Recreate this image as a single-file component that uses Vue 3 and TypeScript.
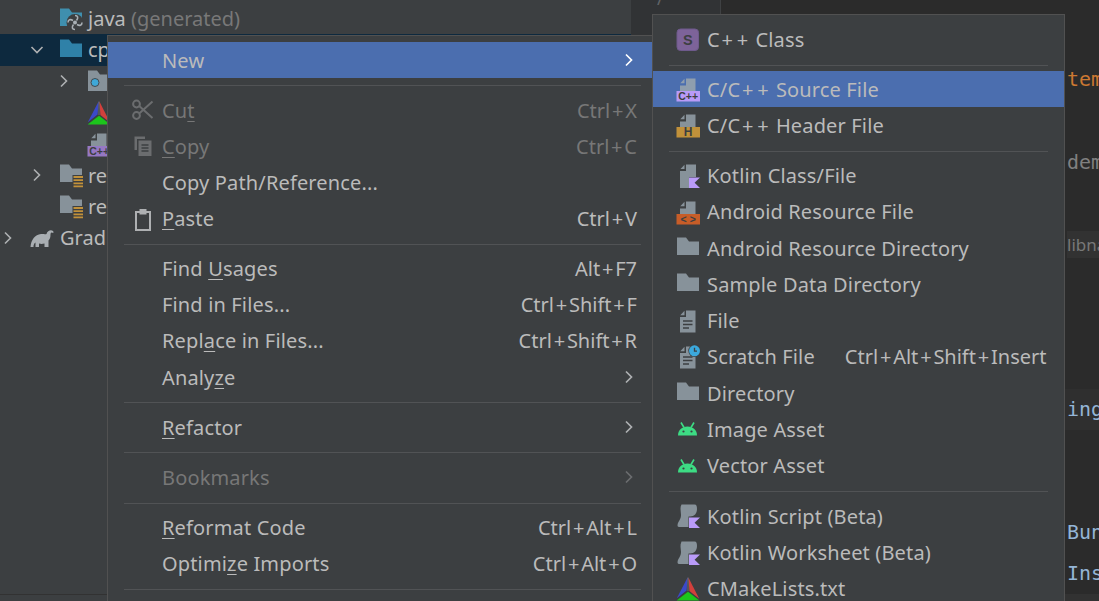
<script setup lang="ts">
import { h } from 'vue'

type Shape = [string, Record<string, string | number>, string?]
const G = '#87929a'
const D = '#3c3f41'
const docBody = 'M10 1.5H19.5V23.5H4V8H10z'
const docFold = 'M8.5 1.8L4.3 6.2H8.5z'
const kTag: Shape = ['path', { d: 'M13 13.5H24L18.6 18.8L24 24H13z', fill: '#b99bf8' }]
const tagDoc = (band: string, label: string, fg: string, size: number, g = '#87929a'): Shape[] => [
  ['path', { d: 'M10 1.5H19.5V14H4V8.4H10z', fill: g }],
  ['path', { d: 'M8.5 1.8L4.3 6.2H8.5z', fill: g }],
  ['rect', { x: 0.5, y: 14, width: 23.5, height: 10.5, fill: band }],
  ['text', { x: 12.2, y: 23, 'text-anchor': 'middle', 'font-size': size, 'font-weight': 700, 'font-family': '"Liberation Sans", sans-serif', fill: fg }, label]
]
const folder = (c: string): Shape[] => [
  ['path', { d: 'M1 1.5H10L13 5.5H23V19H1z', fill: c }]
]
const lines = (c: string): Shape[] => [
  ['path', { d: 'M7 12H16.5M7 15.5H16.5M7 19H13', stroke: c, 'stroke-width': 1.5, fill: 'none' }]
]
const kScript: Shape[] = [
  ['path', { d: 'M5.5 .5H18.5C20.6 .5 21 2.5 21 5C21 9.5 18.5 12.5 14 12.5H12.5V23H3C1.6 23 1.4 22 1.6 20.5C2.2 17 5 15.5 5 11C5 7.5 3.6 4 5.5 .5z', fill: G }],
  kTag
]
const cmake = (w: number): Shape[] => [
  ['path', { d: 'M11.6 0.5L0.8 21.2L10.6 13.6z', fill: '#3b49c9' }],
  ['path', { d: 'M12.4 0.5L23.2 21.8L13.4 14z', fill: '#d2403c' }],
  ['path', { d: 'M0.6 23.5L12 14.8L23.4 23.5z', fill: '#1cc51c' }],
  ['path', { d: 'M12 0.5V14', stroke: '#8d8d9a', 'stroke-width': w, fill: 'none' }]
]
const icons: Record<string, Shape[]> = {
  s: [
    ['rect', { x: 1, y: 1, width: 21.5, height: 21.5, rx: 3.5, fill: '#7d6399', stroke: '#6e5a8c' }],
    ['text', { x: 11.8, y: 17, 'text-anchor': 'middle', 'font-size': 14.5, 'font-weight': 700, 'font-family': '"Liberation Sans", sans-serif', fill: '#3c3f41' }, 'S']
  ],
  cpp: tagDoc('#b99bf8', 'C++', '#3c3f41', 10.5, '#8f9eae'),
  cppTree: tagDoc('#9678c4', 'C++', '#3c3f41', 10.5),
  h: tagDoc('#c1913a', 'H', '#3c3f41', 12),
  res: tagDoc('#c75d28', '< >', '#3c3f41', 10.5),
  kotlin: [
    ['path', { d: 'M10 0.5H20V13H13V24H4V7H10z', fill: G }],
    ['path', { d: 'M8.5 0.8L4.5 5H8.5z', fill: G }],
    kTag
  ],
  folder: folder(G),
  file: [
    ['path', { d: docBody, fill: G }],
    ['path', { d: docFold, fill: G }],
    ...lines(D)
  ],
  scratch: [
    ['path', { d: docBody, fill: G }],
    ['path', { d: docFold, fill: G }],
    ...lines(D),
    ['circle', { cx: 18.5, cy: 5.8, r: 6.2, fill: D }],
    ['circle', { cx: 18.5, cy: 5.8, r: 5.5, fill: '#3ba8dc' }],
    ['path', { d: 'M18.5 2.8V6.2H21', stroke: D, 'stroke-width': 1.3, fill: 'none' }]
  ],
  android: [
    ['path', { d: 'M2 18.5C2 13 6 9.5 11.5 9.5S21 13 21 18.5z', fill: '#3ddc84' }],
    ['path', { d: 'M5 5.5L8 10.5M18 5.5L15 10.5', stroke: '#3ddc84', 'stroke-width': 1.6, fill: 'none' }],
    ['circle', { cx: 7.5, cy: 14.5, r: 1.1, fill: D }],
    ['circle', { cx: 15.5, cy: 14.5, r: 1.1, fill: D }]
  ],
  kscript: kScript,
  cmake: cmake(0.6),
  scissors: [
    ['circle', { cx: 5.5, cy: 6, r: 3.4, fill: 'none', stroke: '#6b6d6f', 'stroke-width': 2 }],
    ['circle', { cx: 5.5, cy: 17.5, r: 3.4, fill: 'none', stroke: '#6b6d6f', 'stroke-width': 2 }],
    ['path', { d: 'M8.2 8L21.5 20M8.2 15.5L21.5 3.5', stroke: '#6b6d6f', 'stroke-width': 2, fill: 'none' }]
  ],
  copy: [
    ['path', { d: 'M3.5 2.5H14V5H6V16H3.5z', fill: '#6b6d6f' }],
    ['path', { d: 'M7.5 6.5H20.5V22H7.5z', fill: '#6b6d6f' }],
    ['path', { d: 'M10.5 11H17.5M10.5 14H17.5M10.5 17H17.5', stroke: D, 'stroke-width': 1.5, fill: 'none' }]
  ],
  paste: [
    ['path', { d: 'M5 5H19V23H5z', fill: 'none', stroke: '#aeb0b2', 'stroke-width': 2 }],
    ['rect', { x: 8.5, y: 2, width: 7, height: 5.5, fill: '#aeb0b2' }]
  ],
  java: [
    ['path', { d: 'M1 1.5H10L13 5.5H23V19H1z', fill: '#3f8fae' }],
    ['circle', { cx: 16, cy: 15.5, r: 8.5, fill: D }],
    ['circle', { cx: 16, cy: 15.5, r: 2, fill: '#a9b0b5' }],
    ['path', { d: 'M16 8.5C19 8.5 19.5 11 17.5 13.5M23 15.5C23 18.5 20.5 19 18 17.5M16 22.5C13 22.5 12.5 20 14.5 17.5M9 15.5C9 12.5 11.5 12 14 13.5', stroke: '#a9b0b5', 'stroke-width': 1.6, fill: 'none' }]
  ],
  blue: folder('#2f81a8'),
  cam: [
    ['path', { d: 'M1 1.5H10L13 5.5H23V22H1z', fill: G }],
    ['circle', { cx: 8, cy: 13.5, r: 4, fill: '#3ea8d8', stroke: '#45494c', 'stroke-width': 1 }]
  ],
  resfolder: [
    ['path', { d: 'M1 1.5H10L13 5.5H23V19H1z', fill: G }],
    ['rect', { x: 13.5, y: 12, width: 11, height: 12.5, fill: D }],
    ['path', { d: 'M14.5 14H24M14.5 17.2H24M14.5 20.4H24M14.5 23.4H24', stroke: '#c1913a', 'stroke-width': 1.8, fill: 'none' }]
  ],
  gradle: [
    ['path', { d: 'M0.5 21C1 14 5 8.5 11 8C14 7.8 15 8.5 16.5 8C17.5 4.5 21 3.5 23 5C24 6 23.5 7.5 22.5 6.8C21.5 6 20.5 6.5 20.5 8.5C20.5 11.5 20 13 18.5 14.5V21H14.5V17.5C12 18.2 10.5 18 9 17.5V21H5.5V16.5C4 17.5 3.5 19 3.5 21z', fill: '#a9aeb2' }]
  ]
}

const Ico = (props: { n: string }) =>
  h(
    'svg',
    { width: 24, height: 24, viewBox: '0 0 24 24', class: 'ico', style: 'flex:none;overflow:visible' },
    (icons[props.n] || []).map(([tag, attrs, txt]) => h(tag, attrs, txt))
  )
Ico.props = ['n']

interface Item {
  sep?: boolean
  h?: number
  label?: string
  u?: number
  icon?: string
  key?: string
  sub?: boolean
  off?: boolean
  sel?: boolean
}

const mainMenu: Item[] = [
  { label: 'New', sub: true, sel: true },
  { sep: true, h: 14 },
  { label: 'Cut', u: 2, icon: 'scissors', key: 'Ctrl+X', off: true },
  { label: 'Copy', u: 0, icon: 'copy', key: 'Ctrl+C', off: true },
  { label: 'Copy Path/Reference...' },
  { label: 'Paste', u: 0, icon: 'paste', key: 'Ctrl+V' },
  { sep: true, h: 13.5 },
  { label: 'Find Usages', u: 5, key: 'Alt+F7' },
  { label: 'Find in Files...', key: 'Ctrl+Shift+F' },
  { label: 'Replace in Files...', u: 4, key: 'Ctrl+Shift+R' },
  { label: 'Analyze', u: 5, sub: true },
  { sep: true, h: 14 },
  { label: 'Refactor', u: 0, sub: true },
  { sep: true, h: 14 },
  { label: 'Bookmarks', sub: true, off: true },
  { sep: true, h: 14 },
  { label: 'Reformat Code', u: 0, key: 'Ctrl+Alt+L' },
  { label: 'Optimize Imports', u: 6, key: 'Ctrl+Alt+O' },
  { sep: true, h: 14 }
]

const subMenu: Item[] = [
  { label: 'C++ Class', icon: 's' },
  { sep: true, h: 13.2 },
  { label: 'C/C++ Source File', icon: 'cpp', sel: true },
  { label: 'C/C++ Header File', icon: 'h' },
  { sep: true, h: 13.85 },
  { label: 'Kotlin Class/File', icon: 'kotlin' },
  { label: 'Android Resource File', icon: 'res' },
  { label: 'Android Resource Directory', icon: 'folder' },
  { label: 'Sample Data Directory', icon: 'folder' },
  { label: 'File', icon: 'file' },
  { label: 'Scratch File', icon: 'scratch', key: 'Ctrl+Alt+Shift+Insert' },
  { label: 'Directory', icon: 'folder' },
  { label: 'Image Asset', icon: 'android' },
  { label: 'Vector Asset', icon: 'android' },
  { sep: true, h: 14.5 },
  { label: 'Kotlin Script (Beta)', icon: 'kscript' },
  { label: 'Kotlin Worksheet (Beta)', icon: 'kscript' },
  { label: 'CMakeLists.txt', icon: 'cmake' }
]

const parts = (i: Item): [string, string, string] => {
  const l = i.label ?? ''
  if (i.u === undefined) return [l, '', '']
  return [l.slice(0, i.u), l[i.u], l.slice(i.u + 1)]
}

const tree = [
  { lvl: 'l1', icon: 'java', text: 'java', note: ' (generated)' },
  { lvl: 'l1', icon: 'blue', text: 'cpp', chev: 'down', sel: true },
  { lvl: 'l2', icon: 'cam', text: 'includes', chev: 'right' },
  { lvl: 'l2', icon: 'cmake', text: 'CMakeLists.txt' },
  { lvl: 'l2', icon: 'cppTree', text: 'native-lib.cpp' },
  { lvl: 'l1', icon: 'resfolder', text: 'res', chev: 'right' },
  { lvl: 'l1', icon: 'resfolder', text: 'res (generated)' },
  { lvl: 'l0', icon: 'gradle', text: 'Gradle Scripts', chev: 'right' }
]

const code = [
  { t: '' },
  { t: 'tem', c: 'orange' },
  { t: '' },
  { t: 'dem', c: 'grey' },
  { t: '' },
  { t: 'libna', c: 'chip' },
  { t: '' }, { t: '' }, { t: '' },
  { t: 'ing', c: 'blue', band: true },
  { t: '' }, { t: '' },
  { t: 'Bun', c: 'blue' },
  { t: 'Ins', c: 'blue' }
]
</script>

<template>
  <div class="app">
    <div class="panes">
      <section class="tree">
        <div v-for="r in tree" :key="r.text" class="tree-row" :class="[r.lvl, { sel: r.sel }]">
          <span class="tchev">
            <svg v-if="r.chev === 'down'" width="16" height="16" viewBox="0 0 16 16"><path d="M2.5 5L8 10.5L13.5 5" fill="none" stroke="#aeb0b2" stroke-width="1.6" /></svg>
            <svg v-else-if="r.chev" width="16" height="16" viewBox="0 0 16 16"><path d="M5 2.5L10.5 8L5 13.5" fill="none" stroke="#aeb0b2" stroke-width="1.6" /></svg>
          </span>
          <Ico :n="r.icon" />
          <span class="tlabel">{{ r.text }}<span v-if="r.note" class="note">{{ r.note }}</span></span>
        </div>
      </section>
      <section class="gutter"><span class="fold">/</span></section>
      <section class="editor">
        <div v-for="(l, i) in code" :key="i" class="line" :class="{ band: l.band }">
          <span :class="l.c">{{ l.t }}</span>
        </div>
      </section>
    </div>
    <div class="footer"><div class="fleft"></div><div class="fright"></div></div>

    <nav class="menu main">
      <template v-for="(m, i) in mainMenu" :key="i">
        <div v-if="m.sep" class="sep" :style="{ height: m.h + 'px' }"><i></i></div>
        <div v-else class="row" :class="{ sel: m.sel, off: m.off }">
          <span class="slot"><Ico v-if="m.icon" :n="m.icon" /></span>
          <span class="label">{{ parts(m)[0] }}<u v-if="parts(m)[1]">{{ parts(m)[1] }}</u>{{ parts(m)[2] }}</span>
          <span v-if="m.key" class="key"><template v-for="(c, j) in m.key.split('+')" :key="j"><span v-if="j" class="plus">+</span>{{ c }}</template></span>
          <svg v-if="m.sub" class="arrow" width="12" height="16" viewBox="0 0 12 16"><path d="M3 2.5L8.5 8L3 13.5" fill="none" :stroke="m.sel ? '#ffffff' : m.off ? '#6b6d6f' : '#aeb0b2'" stroke-width="1.7" /></svg>
        </div>
      </template>
    </nav>

    <nav class="menu second">
      <template v-for="(m, i) in subMenu" :key="i">
        <div v-if="m.sep" class="sep" :style="{ height: m.h + 'px' }"><i></i></div>
        <div v-else class="row" :class="{ sel: m.sel }">
          <Ico v-if="m.icon" :n="m.icon" />
          <span class="label"><template v-for="(c, j) in (m.label ?? '').split('+')" :key="j"><span v-if="j" class="plus">+</span>{{ c }}</template></span>
          <span v-if="m.key" class="key"><template v-for="(c, j) in m.key.split('+')" :key="j"><span v-if="j" class="plus">+</span>{{ c }}</template></span>
        </div>
      </template>
    </nav>
  </div>
</template>

<style>
html, body { margin: 0; background: #2b2b2b; overflow: hidden; }
</style>

<style scoped>
.app {
  position: relative;
  width: 1099px;
  height: 601px;
  overflow: hidden;
  display: flex;
  flex-direction: column;
  font-family: "Noto Sans", "Open Sans", sans-serif;
  font-size: 20px;
  color: #bbbbbb;
  background: #2b2b2b;
}
.panes { flex: 1; display: flex; min-height: 0; }
.tree { width: 631px; flex: none; background: #3c3f41; padding-top: 3px; box-sizing: border-box; overflow: hidden; }
.tree-row { height: 31.3px; display: flex; align-items: center; white-space: nowrap; }
.tree-row.sel { background: #0d293e; }
.tree-row.l0 { padding-left: 0; }
.tree-row.l1 { padding-left: 29px; }
.tree-row.l2 { padding-left: 57px; }
.tchev { width: 16px; height: 16px; margin-right: 14px; flex: none; display: flex; }
.tree-row.l2 .tchev { margin-right: 15px; margin-left: -1px; }
.tlabel { margin-left: 5px; }
.tree-row.l0 .tlabel { margin-left: 6px; }
.note { color: #787878; }
.gutter { width: 89px; flex: none; background: #313335; border-right: 1px solid #3f4143; position: relative; overflow: hidden; }
.fold { position: absolute; left: 26px; top: -14px; color: #606366; font-size: 18px; }
.editor {
  flex: 1;
  min-width: 0;
  padding: 18px 0 0 346px;
  font-family: "DejaVu Sans Mono", "Liberation Mono", monospace;
  font-size: 20px;
  overflow: hidden;
}
.line { height: 41.2px; line-height: 41.2px; white-space: nowrap; overflow: hidden; margin-left: -3px; padding-left: 3px; }
.line.band { background: #2f2f2f; }
.orange { color: #cc7832; }
.grey { color: #808080; }
.chip {
  color: #787878;
  background: #323232;
  display: inline-block;
  height: 27px;
  line-height: 27px;
  width: 60px;
  font-family: "Noto Sans", sans-serif;
  font-size: 17px;
}
.blue { color: #94b5d6; }
.footer { height: 7px; flex: none; display: flex; }
.fleft { width: 631px; background: #3c3f41; border-top: 1px solid #323232; box-sizing: border-box; }
.fright { flex: 1; background: #323232; }

.menu {
  position: absolute;
  background: #3c3f41;
  border: 1px solid #515151;
  box-sizing: border-box;
  padding: 6px 0;
}
.main { left: 107px; top: 35px; width: 546px; height: 580px; z-index: 1; }
.second { left: 652px; top: 14px; width: 413px; height: 600px; z-index: 2; padding-top: 6.6px; }
.row { height: 36.2px; display: flex; align-items: center; white-space: nowrap; box-sizing: border-box; }
.row.sel { background: #4b6eaf; }
.main .row { padding-left: 23px; padding-right: 15px; }
.second .row { height: 36.25px; padding-left: 23px; padding-right: 19px; }
.slot { width: 24px; height: 24px; flex: none; display: flex; }
.label { letter-spacing: 0.15px; }
.main .label { margin-left: 7px; }
.second .label { margin-left: 7px; }
.key { margin-left: auto; }
.second .key { margin-left: 30px; }
.plus { margin: 0 1.8px; }
.arrow { margin-left: auto; margin-right: 2px; }
.row.off { color: #777777; }
.sep { padding-top: 7px; box-sizing: border-box; display: flex; align-items: flex-start; }
.sep i { display: block; height: 1px; flex: 1; background: #515355; }
.main .sep { padding-left: 16px; padding-right: 11px; }
.second .sep { padding-left: 16px; padding-right: 16px; }
u { text-underline-offset: 3px; text-decoration-thickness: 1px; }
</style>
